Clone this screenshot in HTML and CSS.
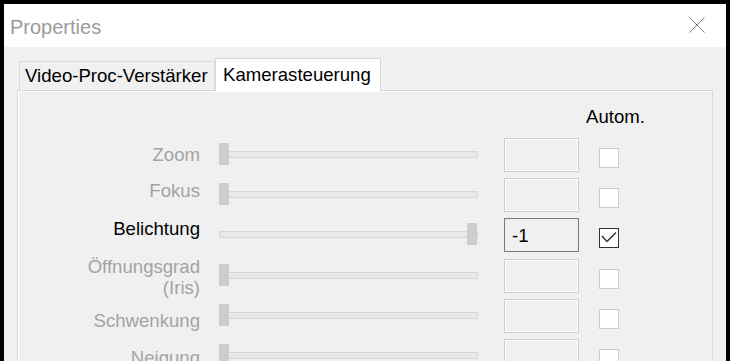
FILE: index.html
```html
<!DOCTYPE html>
<html>
<head>
<meta charset="utf-8">
<title>Properties</title>
<link rel="stylesheet" href="styles.css">
</head>
<body>
<div class="window">
  <div class="titlebar">
    <span class="title">Properties</span>
    <svg class="close" width="16" height="16" viewBox="0 0 16 16"><path d="M0.5 0.5 L15.5 15.5 M15.5 0.5 L0.5 15.5" stroke="#7a7a7a" stroke-width="1" fill="none"/></svg>
  </div>
  <div class="content">
    <div class="tabs">
      <div class="tab">Video-Proc-Verstärker</div>
      <div class="tab active">Kamerasteuerung</div>
    </div>
    <div class="panel">
      <div class="grid">
        <div class="head">Autom.</div>

        <div class="lbl dis o-zoom">Zoom</div>
        <div class="slider"><div class="track"></div><div class="thumb"></div></div>
        <div class="edit dis"></div>
        <div class="chk dis"></div>

        <div class="lbl dis o-fokus">Fokus</div>
        <div class="slider"><div class="track"></div><div class="thumb"></div></div>
        <div class="edit dis"></div>
        <div class="chk dis"></div>

        <div class="lbl o-bel">Belichtung</div>
        <div class="slider"><div class="track"></div><div class="thumb end"></div></div>
        <div class="edit on">-1</div>
        <div class="chk on"><svg width="18" height="18" viewBox="0 0 18 18"><polyline points="2,7 7,12.5 16,3.5" fill="none" stroke="#333" stroke-width="1.5"/></svg></div>

        <div class="lbl dis o-iris">Öffnungsgrad<br>(Iris)</div>
        <div class="slider"><div class="track"></div><div class="thumb"></div></div>
        <div class="edit dis"></div>
        <div class="chk dis"></div>

        <div class="lbl dis o-schw">Schwenkung</div>
        <div class="slider"><div class="track"></div><div class="thumb"></div></div>
        <div class="edit dis"></div>
        <div class="chk dis"></div>

        <div class="lbl dis o-neig">Neigung</div>
        <div class="slider"><div class="track"></div><div class="thumb"></div></div>
        <div class="edit dis"></div>
        <div class="chk dis"></div>
      </div>
    </div>
  </div>
</div>
</body>
</html>
```
FILE: styles.css
```css
html, body {
  margin: 0;
  padding: 0;
  background: #000;
  height: 361px;
  overflow: hidden;
  font-family: "Liberation Sans", Arial, sans-serif;
}

.window {
  margin: 4px 4px 0 4px;
  height: 357px;
  background: #f0f0f0;
  display: flex;
  flex-direction: column;
  overflow: hidden;
}

.titlebar {
  flex: none;
  height: 43px;
  background: #fff;
  display: flex;
  justify-content: space-between;
  align-items: flex-start;
  padding: 0 21px 0 6px;
}

.title {
  font-size: 20px;
  line-height: 24px;
  margin-top: 11px;
  color: #9a9a9a;
}

.close {
  margin-top: 13px;
  display: block;
}

.content {
  flex: 1;
  padding-top: 11px;
  display: flex;
  flex-direction: column;
}

.tabs {
  display: flex;
  align-items: flex-start;
  margin-left: 15px;
  height: 33px;
  position: relative;
  z-index: 1;
}

.tab {
  box-sizing: border-box;
  font-size: 18.6px;
  line-height: 21px;
  color: #000;
  height: 29px;
  margin-top: 3px;
  width: 196px;
  border: 1px solid #d9d9d9;
  border-bottom: none;
  padding: 3px 0 0 5px;
  background: #f0f0f0;
  white-space: nowrap;
}

.tab.active {
  width: 166px;
  height: 33px;
  margin-top: 0;
  padding: 5px 0 0 7px;
  background: #fff;
}

.panel {
  flex: 1;
  box-sizing: border-box;
  margin: -1px 0 0 13px;
  width: 696px;
  border: 1px solid #d9d9d9;
  box-shadow: inset 1px 1px 0 #fff;
}

.grid {
  display: grid;
  grid-template-columns: 182px 19px 259px 26px 75px 20px 20px;
  grid-template-rows: 32px repeat(6, 40.2px);
  padding-top: 15px;
  font-size: 18.6px;
  line-height: 21px;
}

.head {
  grid-column: 5 / 8;
  padding-left: 82px;
  white-space: nowrap;
  color: #000;
}

.lbl {
  grid-column: 1;
  text-align: right;
  color: #000;
  white-space: nowrap;
  align-self: start;
}

.lbl.dis { color: #a3a3a3; }

.o-zoom { margin-top: 6px; }
.o-fokus { margin-top: 2px; }
.o-bel { margin-top: 0; }
.o-iris { margin-top: -3px; }
.o-schw { margin-top: 11px; }
.o-neig { margin-top: 8px; }

.slider {
  grid-column: 3;
  position: relative;
  height: 22px;
  margin-top: 5px;
  align-self: start;
}

.track {
  box-sizing: border-box;
  margin-top: 8px;
  height: 7px;
  background: #e7e8e8;
  border: 1px solid #d6d6d6;
}

.thumb {
  position: absolute;
  top: 0;
  left: 0;
  width: 10px;
  height: 22px;
  background: #cdcdcd;
}

.thumb.end {
  left: auto;
  right: 1px;
}

.edit {
  grid-column: 5;
  box-sizing: border-box;
  height: 34px;
  align-self: start;
  display: flex;
  align-items: center;
  padding-left: 7px;
  background: #f0f0f0;
  color: #000;
}

.edit.dis {
  border: 1px solid #cfcfcf;
  box-shadow: inset 0 0 0 1px #fff;
}

.edit.on {
  border: 1px solid #7a7a7a;
}

.chk {
  grid-column: 7;
  box-sizing: border-box;
  width: 20px;
  height: 20px;
  margin-top: 10px;
  align-self: start;
  background: #fff;
}

.chk svg { display: block; }

.chk.dis { border: 1px solid #cccccc; }
.chk.on { border: 1px solid #333; }
```
